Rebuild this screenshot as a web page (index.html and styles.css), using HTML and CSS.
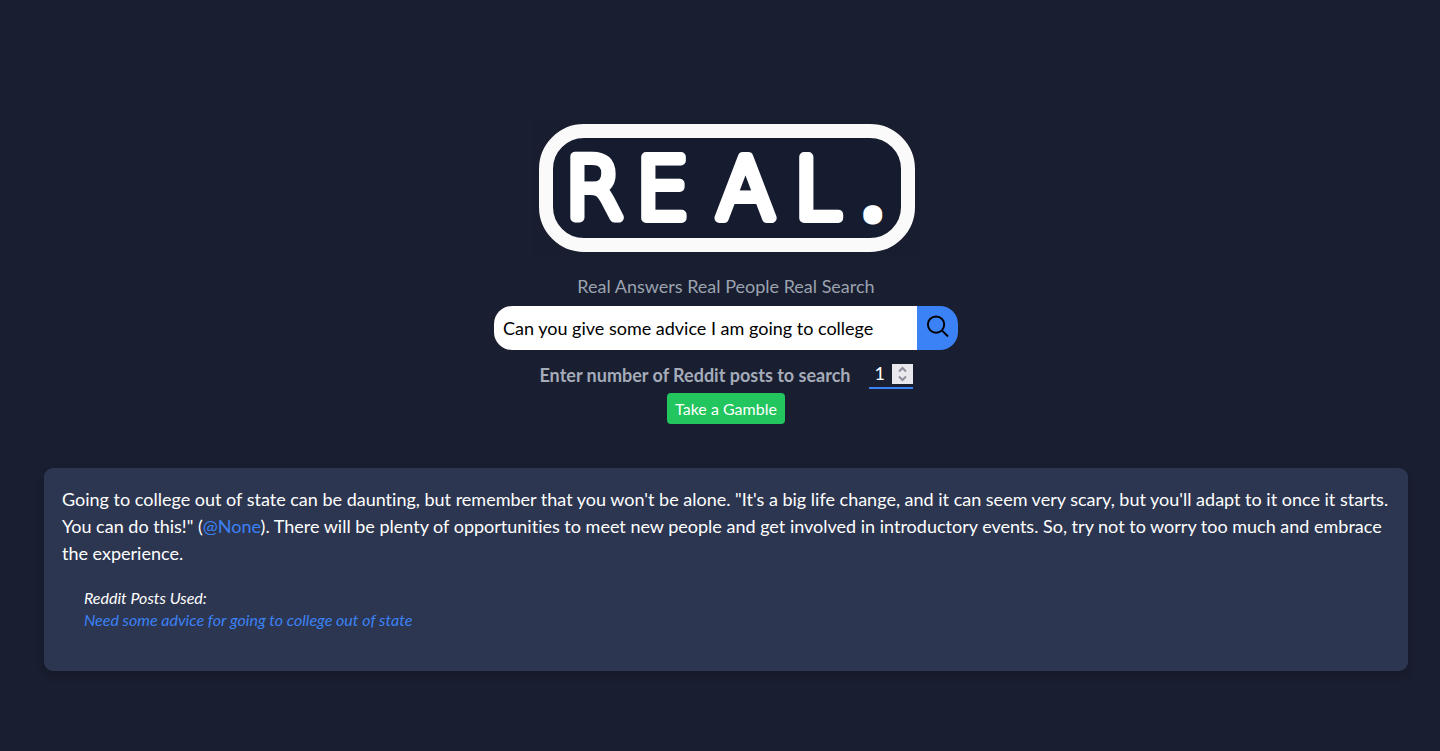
FILE: index.html
```html
<!DOCTYPE html>
<html lang="en">
<head>
  <meta charset="UTF-8">
  <meta name="viewport" content="width=device-width, initial-scale=1.0">
  <title>REAL.</title>
  <link rel="stylesheet" href="styles.css">
</head>
<body>
  <header class="hero">
    <svg class="logo" viewBox="0 0 386 136" role="img" aria-label="REAL.">
      <rect class="logo-frame" x="13" y="11" width="362" height="114" rx="38" />
      <text class="logo-text" y="98"><tspan x="32">R</tspan><tspan x="103">E</tspan><tspan x="184">A</tspan><tspan x="261">L</tspan><tspan class="logo-dot" x="334" y="96">.</tspan></text>
    </svg>
    <p class="tagline">Real Answers Real People Real Search</p>

    <form id="searchForm" class="search-form">
      <div class="search-bar">
        <input class="search-input" type="text" name="query" aria-label="Search" value="Can you give some advice I am going to college">
        <button class="search-button" type="submit" aria-label="Search">
          <svg class="search-icon" viewBox="0 0 24 24">
            <circle cx="10.500" cy="10.500" r="8.500" />
            <path d="M16.500 16.500L23 23" />
          </svg>
        </button>
      </div>
      <div class="post-count">
        <label for="posts">Enter number of Reddit posts to search</label>
        <div class="number-field">
          <input type="number" id="posts" name="posts" min="1" value="1">
          <svg class="spinner" viewBox="0 0 21 20">
            <path d="M7 7.500L10.500 4L14 7.500M7 12.500L10.500 16L14 12.500" />
          </svg>
        </div>
      </div>
      <button class="gamble-button" type="button">Take a Gamble</button>
    </form>
  </header>

  <main class="result">
    <p class="answer">Going to college out of state can be daunting, but remember that you won't be alone. "It's a big life change, and it can seem very scary, but you'll adapt to it once it starts. You can do this!" (<a href="#">@None</a>). There will be plenty of opportunities to meet new people and get involved in introductory events. So, try not to worry too much and embrace the experience.</p>
    <div class="sources">
      <p>Reddit Posts Used:</p>
      <a href="#">Need some advice for going to college out of state</a>
    </div>
  </main>
</body>
</html>
```
FILE: styles.css
```css
* {
  box-sizing: border-box;
}

body {
  margin: 0;
  padding: 120px 32px 80px 44px;
  background-color: #191e30;
  color: white;
  font-family: Lato, "Noto Sans", sans-serif;
  font-size: 18px;
  font-variant-ligatures: none;
  line-height: 27px;
}

p {
  margin: 0;
}

a {
  color: #3b82f6;
  text-decoration: none;
}

input,
button {
  border: none;
  font: inherit;
}

.hero {
  display: flex;
  flex-direction: column;
  align-items: center;
}

.logo {
  width: 386px;
  max-width: 100%;
  background-color: #181d2f;
}

.logo-frame {
  fill: #151c2f;
  stroke: #fbfafb;
  stroke-width: 14px;
}

.logo-text {
  fill: white;
  stroke: white;
  stroke-width: 10px;
  stroke-linejoin: round;
  font-family: "DejaVu Sans", sans-serif;
  font-size: 84px;
  font-weight: 200;
}

.logo-dot {
  stroke-width: 17px;
  font-size: 36px;
}

.tagline {
  margin-top: 17px;
  color: #9ca3af;
}

.search-form {
  display: flex;
  flex-direction: column;
  align-items: center;
  width: 464px;
  max-width: 100%;
  margin-top: 6px;
}

.search-bar {
  display: flex;
  width: 100%;
  height: 44px;
  border-radius: 18px;
  overflow: hidden;
}

.search-input {
  flex: 1;
  min-width: 0;
  padding: 0 9px;
  background-color: white;
  color: black;
}

.search-button {
  display: flex;
  width: 41px;
  padding: 8px 9px;
  background-color: #3b82f6;
}

.search-icon {
  width: 24px;
  height: 24px;
  fill: none;
  stroke: black;
  stroke-width: 2px;
}

.post-count {
  display: flex;
  align-items: center;
  gap: 18px;
  margin-top: 12px;
  color: #a4abb9;
  font-weight: 700;
}

.number-field {
  display: flex;
  align-items: center;
  width: 44px;
  height: 27px;
  padding-bottom: 2px;
  border-bottom: 2px solid #3b82f6;
}

.number-field input {
  flex: 1;
  min-width: 0;
  padding: 0 0 0 6px;
  background-color: transparent;
  color: white;
  font-weight: 400;
  appearance: textfield;
}

.number-field input::-webkit-inner-spin-button {
  display: none;
}

.spinner {
  width: 21px;
  height: 20px;
  background-color: #e9e9ed;
  fill: none;
  stroke: #8f8f9d;
  stroke-width: 2px;
}

.gamble-button {
  height: 31px;
  margin-top: 4px;
  padding: 0 8px;
  border-radius: 4px;
  background-color: #22c55e;
  color: white;
  font-size: 16px;
  line-height: 22px;
}

.result {
  margin-top: 44px;
  padding: 18px 18px 40px;
  border-radius: 9px;
  background-color: #2d3650;
  box-shadow: 0 4px 8px rgba(0, 0, 0, 0.15);
}

.sources {
  padding: 20px 22px 0;
  font-size: 16px;
  font-style: italic;
  line-height: 22px;
}
```
